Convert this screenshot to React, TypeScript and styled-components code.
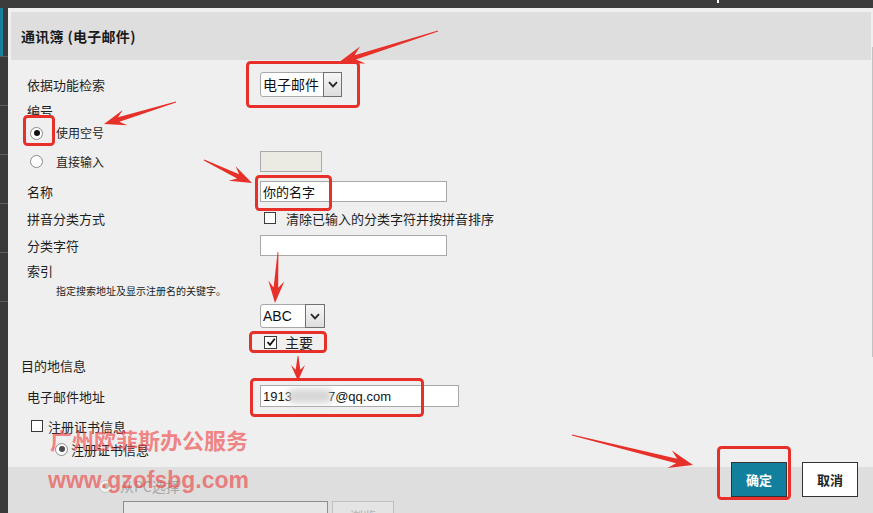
import React from "react";
import styled, { createGlobalStyle } from "styled-components";

const GlobalStyle = createGlobalStyle`
  html, body {
    margin: 0;
    padding: 0;
    background: #efefef;
  }
  body {
    font-family: "Noto Sans CJK SC", "Noto Sans", sans-serif;
    color: #1e1e1e;
  }
  * {
    box-sizing: border-box;
  }
`;

const Page = styled.div`
  position: relative;
  width: 873px;
  height: 513px;
  overflow: hidden;
  display: flex;
  flex-direction: column;
  background: #efefef;
`;

const TopBar = styled.div`
  height: 8px;
  flex: none;
  background: #3c3c3c;
  display: flex;
`;

const TopMark = styled.span`
  margin-left: 717px;
  width: 2px;
  height: 3px;
  background: #fff;
`;

const Body = styled.div`
  flex: 1;
  display: flex;
  min-height: 0;
`;

const LeftStrip = styled.div`
  width: 8px;
  flex: none;
  background: #3a3a3a;
  display: flex;
  flex-direction: column;
`;

const LeftTab = styled.div<{ $active?: boolean }>`
  height: 49px;
  border-bottom: 1px solid #5e5e5e;
  box-shadow: ${(p) => (p.$active ? "inset 3px 0 #17809e" : "none")};
`;

const Dialog = styled.div`
  flex: 1;
  display: flex;
  flex-direction: column;
  background: #efefef;
  min-width: 0;
`;

const DialogMain = styled.div`
  flex: 1;
  display: flex;
  min-height: 0;
  overflow: hidden;
`;

const Content = styled.div`
  flex: 1;
  padding-top: 4px;
  min-width: 0;
`;

const Header = styled.div`
  margin-left: 3px;
  height: 48px;
  background: #dedede;
  display: flex;
  align-items: center;
  padding-left: 10px;
  font-size: 14px;
  font-weight: 700;
  letter-spacing: 0.3px;
  color: #1a1a1a;
`;

const ScrollTrack = styled.div`
  width: 2px;
  flex: none;
  display: flex;
  justify-content: flex-end;
`;

const ScrollThumb = styled.div`
  margin-top: 39px;
  width: 1px;
  height: 310px;
  background: #c2c2c2;
`;

const Form = styled.div`
  padding-left: 19px;
  padding-top: 6px;
`;

const Row = styled.div<{ $h: number }>`
  height: ${(p) => p.$h}px;
  display: grid;
  grid-template-columns: 233px 1fr;
  align-items: center;
`;

const Cell = styled.div<{ $indent?: number; $gap?: number }>`
  display: flex;
  align-items: center;
  gap: ${(p) => p.$gap ?? 0}px;
  margin-left: ${(p) => p.$indent ?? 0}px;
  line-height: 1;
`;

const Label = styled.span<{ $size?: number }>`
  font-size: ${(p) => p.$size ?? 13}px;
  line-height: 1;
  white-space: nowrap;
  color: #1e1e1e;
`;

const Hint = styled.span`
  font-size: 10px;
  line-height: 1;
  white-space: nowrap;
  margin-left: 29px;
  color: #222;
`;

const RadioDot = styled.span<{ $on?: boolean; $tone?: "dark" | "mid" | "light" }>`
  width: 13px;
  height: 13px;
  flex: none;
  border-radius: 50%;
  border: 1px solid
    ${(p) => (p.$tone === "light" ? "#c4c4c4" : p.$tone === "mid" ? "#8c8c8c" : "#8a8a8a")};
  background: ${(p) => (p.$tone === "light" ? "#f2f2f2" : "#fff")};
  display: inline-flex;
  align-items: center;
  justify-content: center;
  &::after {
    content: "";
    width: 6px;
    height: 6px;
    border-radius: 50%;
    background: ${(p) =>
      !p.$on ? "transparent" : p.$tone === "light" ? "#bdbdbd" : p.$tone === "mid" ? "#4a4a4a" : "#111"};
  }
`;

const CheckBox = styled.span<{ $size?: number }>`
  width: ${(p) => p.$size ?? 12}px;
  height: ${(p) => p.$size ?? 12}px;
  flex: none;
  border: 1px solid #3a3a3a;
  background: #fff;
  display: inline-flex;
  align-items: center;
  justify-content: center;
`;

const TextInput = styled.div<{ $w: number; $disabled?: boolean }>`
  width: ${(p) => p.$w}px;
  height: 21px;
  border: 1px solid #a9a9a9;
  background: ${(p) => (p.$disabled ? "#ebebe4" : "#fff")};
  display: flex;
  align-items: center;
  padding-left: 2px;
  font-size: 13px;
  line-height: 1;
  color: #111;
  white-space: nowrap;
`;

const EmailInput = styled(TextInput)`
  height: 22px;
  font-family: "Liberation Sans", Arial, sans-serif;
  font-size: 13px;
`;

const Blur = styled.span`
  display: inline-block;
  width: 42px;
  height: 14px;
  background: #d6d6d6;
  filter: blur(3px);
  margin-left: -3px;
  margin-right: -3px;
`;

const SelectBox = styled.div<{ $w: number; $h: number }>`
  width: ${(p) => p.$w}px;
  height: ${(p) => p.$h}px;
  display: flex;
  background: #fff;
  border: 1px solid #a8a8a8;
  border-radius: 3px;
`;

const SelectText = styled.span<{ $latin?: boolean }>`
  flex: 1;
  display: flex;
  align-items: center;
  padding-left: 2px;
  font-size: 14px;
  line-height: 1;
  color: #111;
  font-family: ${(p) =>
    p.$latin ? '"Liberation Sans", Arial, sans-serif' : '"Noto Sans CJK SC", sans-serif'};
`;

const SelectArrow = styled.span<{ $w: number }>`
  width: ${(p) => p.$w}px;
  margin: -1px -1px -1px 0;
  border: 1px solid #707070;
  background: linear-gradient(#f6f6f6, #dedede);
  display: flex;
  align-items: center;
  justify-content: center;
`;

const Footer = styled.div`
  height: 46px;
  flex: none;
  background: #dedede;
  display: flex;
`;

const FooterLeft = styled.div`
  flex: 1;
  padding-top: 12px;
  display: flex;
  flex-direction: column;
  gap: 8px;
`;

const MutedLine = styled.div<{ $indent: number }>`
  display: flex;
  align-items: center;
  gap: 8px;
  margin-left: ${(p) => p.$indent}px;
`;

const MutedLabel = styled.span`
  font-size: 14px;
  line-height: 1;
  color: #a6a6a6;
`;

const FileField = styled.div`
  width: 205px;
  height: 22px;
  border: 1px solid #8e8e8e;
  border-bottom: none;
  background: #e6e6e6;
`;

const BrowseButton = styled.div`
  width: 62px;
  height: 22px;
  margin-left: 4px;
  border: 1px solid #c0c0c0;
  border-bottom: none;
  background: #e4e4e4;
  color: #b4b4b4;
  font-size: 13px;
  display: flex;
  justify-content: center;
  padding-top: 4px;
`;

const FileRow = styled.div`
  display: flex;
  margin-left: 115px;
`;

const Buttons = styled.div`
  display: flex;
  gap: 15px;
  padding-right: 15px;
  margin-top: -5px;
  align-self: flex-start;
`;

const Button = styled.button<{ $primary?: boolean }>`
  width: 56px;
  height: 35px;
  border: 1px solid #333;
  background: ${(p) => (p.$primary ? "#12809c" : "#fff")};
  color: ${(p) => (p.$primary ? "#fff" : "#222")};
  font-family: "Noto Sans CJK SC", sans-serif;
  font-size: 13px;
  font-weight: 700;
  padding: 0;
  cursor: pointer;
`;

const Overlay = styled.svg`
  position: absolute;
  left: 0;
  top: 0;
  pointer-events: none;
`;

const Watermark = styled.div<{ $x: number; $y: number; $size: number; $latin?: boolean }>`
  position: absolute;
  left: ${(p) => p.$x}px;
  top: ${(p) => p.$y}px;
  font-size: ${(p) => p.$size}px;
  line-height: 1;
  font-weight: 700;
  color: rgba(240, 60, 60, 0.62);
  white-space: nowrap;
  font-family: ${(p) =>
    p.$latin ? '"Liberation Sans", Arial, sans-serif' : '"Noto Sans CJK SC", sans-serif'};
  pointer-events: none;
`;

const Chevron = () => (
  <svg width="10" height="7" viewBox="0 0 10 7">
    <path d="M1 1.2 L5 5.4 L9 1.2" fill="none" stroke="#222" strokeWidth="1.7" />
  </svg>
);

const Tick = () => (
  <svg width="10" height="10" viewBox="0 0 10 10">
    <path d="M1.5 5 L4 7.8 L8.8 1.8" fill="none" stroke="#111" strokeWidth="1.8" />
  </svg>
);

const RED = "#e8302a";

const arrowPoints = (tx: number, ty: number, px: number, py: number, head: number, wing: number) => {
  const dx = px - tx;
  const dy = py - ty;
  const len = Math.hypot(dx, dy);
  const ux = dx / len;
  const uy = dy / len;
  const nx = -uy;
  const ny = ux;
  const bx = px - ux * head * 0.7;
  const by = py - uy * head * 0.7;
  const hx = px - ux * head;
  const hy = py - uy * head;
  const pts = [
    [tx + nx * 0.4, ty + ny * 0.4],
    [bx + nx * 2.3, by + ny * 2.3],
    [hx + nx * wing, hy + ny * wing],
    [px, py],
    [hx - nx * wing, hy - ny * wing],
    [bx - nx * 2.3, by - ny * 2.3],
    [tx - nx * 0.4, ty - ny * 0.4],
  ];
  return pts.map((p) => p.map((v) => v.toFixed(1)).join(",")).join(" ");
};

const arrows = [
  { t: [438, 31], p: [338, 63], head: 26, wing: 9 },
  { t: [176, 102], p: [104, 124], head: 22, wing: 8 },
  { t: [204, 160], p: [252, 183], head: 22, wing: 8 },
  { t: [278, 252], p: [275, 303], head: 22, wing: 8 },
  { t: [298, 356], p: [298, 381], head: 16, wing: 7 },
  { t: [572, 435], p: [693, 465], head: 24, wing: 9 },
];

const boxes = [
  { x: 246, y: 61, w: 114, h: 47 },
  { x: 23, y: 115, w: 32, h: 31 },
  { x: 255, y: 175, w: 77, h: 36 },
  { x: 249, y: 331, w: 78, h: 22 },
  { x: 250, y: 378, w: 174, h: 39 },
  { x: 717, y: 446, w: 74, h: 54 },
];

export default function App() {
  return (
    <>
      <GlobalStyle />
      <Page>
        <TopBar>
          <TopMark />
        </TopBar>
        <Body>
          <LeftStrip>
            <LeftTab $active />
            <LeftTab />
            <LeftTab />
            <LeftTab />
            <LeftTab />
            <LeftTab />
          </LeftStrip>
          <Dialog>
            <DialogMain>
              <Content>
                <Header>通讯簿 (电子邮件)</Header>
                <Form>
                  <Row $h={36}>
                    <Label>依据功能检索</Label>
                    <SelectBox $w={82} $h={25}>
                      <SelectText>电子邮件</SelectText>
                      <SelectArrow $w={19}>
                        <Chevron />
                      </SelectArrow>
                    </SelectBox>
                  </Row>
                  <Row $h={16}>
                    <Label>编号</Label>
                  </Row>
                  <Row $h={30}>
                    <Cell $indent={3} $gap={13}>
                      <RadioDot $on />
                      <Label $size={12}>使用空号</Label>
                    </Cell>
                  </Row>
                  <Row $h={27}>
                    <Cell $indent={3} $gap={13}>
                      <RadioDot />
                      <Label $size={12}>直接输入</Label>
                    </Cell>
                    <TextInput $w={62} $disabled />
                  </Row>
                  <Row $h={33}>
                    <Label>名称</Label>
                    <TextInput $w={187}>你的名字</TextInput>
                  </Row>
                  <Row $h={20}>
                    <Label>拼音分类方式</Label>
                    <Cell $indent={4} $gap={10}>
                      <CheckBox $size={12} />
                      <Label>清除已输入的分类字符并按拼音排序</Label>
                    </Cell>
                  </Row>
                  <Row $h={34}>
                    <Label>分类字符</Label>
                    <TextInput $w={187} />
                  </Row>
                  <Row $h={16}>
                    <Label>索引</Label>
                  </Row>
                  <Row $h={26}>
                    <Hint>指定搜索地址及显示注册名的关键字。</Hint>
                  </Row>
                  <Row $h={24}>
                    <span />
                    <SelectBox $w={65} $h={24}>
                      <SelectText $latin>ABC</SelectText>
                      <SelectArrow $w={20}>
                        <Chevron />
                      </SelectArrow>
                    </SelectBox>
                  </Row>
                  <Row $h={28}>
                    <span />
                    <Cell $indent={4} $gap={8}>
                      <CheckBox $size={13}>
                        <Tick />
                      </CheckBox>
                      <Label $size={14}>主要</Label>
                    </Cell>
                  </Row>
                  <Row $h={18}>
                    <Cell $indent={-6}>
                      <Label>目的地信息</Label>
                    </Cell>
                  </Row>
                  <Row $h={44}>
                    <Label>电子邮件地址</Label>
                    <EmailInput $w={199}>
                      1913
                      <Blur />
                      7@qq.com
                    </EmailInput>
                  </Row>
                  <Row $h={16}>
                    <Cell $indent={4} $gap={5}>
                      <CheckBox $size={12} />
                      <Label>注册证书信息</Label>
                    </Cell>
                  </Row>
                  <Row $h={30}>
                    <Cell $indent={28} $gap={3}>
                      <RadioDot $on $tone="mid" />
                      <Label>注册证书信息</Label>
                    </Cell>
                  </Row>
                </Form>
              </Content>
              <ScrollTrack>
                <ScrollThumb />
              </ScrollTrack>
            </DialogMain>
            <Footer>
              <FooterLeft>
                <MutedLine $indent={91}>
                  <RadioDot $on $tone="light" />
                  <MutedLabel>从PC选择</MutedLabel>
                </MutedLine>
                <FileRow>
                  <FileField />
                  <BrowseButton>浏览</BrowseButton>
                </FileRow>
              </FooterLeft>
              <Buttons>
                <Button $primary>确定</Button>
                <Button>取消</Button>
              </Buttons>
            </Footer>
          </Dialog>
        </Body>

        <Watermark $x={50} $y={428} $size={22}>
          广州欧菲斯办公服务
        </Watermark>
        <Watermark $x={48} $y={469} $size={23} $latin>
          www.gzofsbg.com
        </Watermark>

        <Overlay width="873" height="513" viewBox="0 0 873 513">
          {boxes.map((b, i) => (
            <rect
              key={i}
              x={b.x + 1.5}
              y={b.y + 1.5}
              width={b.w - 3}
              height={b.h - 3}
              rx="3"
              fill="none"
              stroke={RED}
              strokeWidth="3"
            />
          ))}
          {arrows.map((a, i) => (
            <polygon
              key={i}
              points={arrowPoints(a.t[0], a.t[1], a.p[0], a.p[1], a.head, a.wing)}
              fill={RED}
            />
          ))}
        </Overlay>
      </Page>
    </>
  );
}
